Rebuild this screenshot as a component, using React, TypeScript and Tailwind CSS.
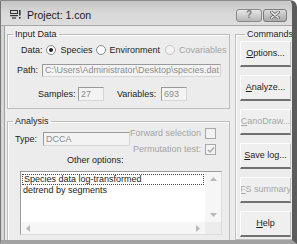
import React from "react";

function Radio({ checked, disabled }: { checked?: boolean; disabled?: boolean }) {
  return (
    <span
      className={`w-[10px] h-[10px] rounded-full border flex items-center justify-center shrink-0 ${
        disabled ? "border-[#c4c4c4] bg-[#f4f4f4]" : "border-[#8a8a8a] bg-white"
      }`}
    >
      {checked && <span className="w-[4px] h-[4px] rounded-full bg-[#1e1e1e]" />}
    </span>
  );
}

function Check({ checked }: { checked?: boolean }) {
  return (
    <span className="w-[11px] h-[11px] border border-[#a8a8a8] bg-[#f2f2f2] flex items-center justify-center shrink-0">
      {checked && (
        <svg width="8" height="8" viewBox="0 0 8 8">
          <path d="M1 4 L3 6 L7 1.5" fill="none" stroke="#a8a8a8" strokeWidth="1.4" />
        </svg>
      )}
    </span>
  );
}

function Btn({ pre, rest, disabled }: { pre: string; rest: string; disabled?: boolean }) {
  return (
    <div
      className={`h-[26px] w-[51px] flex items-center justify-center bg-[#efefef] border-t border-l border-t-white border-l-white border-r border-r-[#c4c4c4] border-b-2 border-b-[#707070] whitespace-nowrap overflow-hidden ${
        disabled ? "text-[#a6a6a6]" : "text-[#1c1c1c]"
      }`}
    >
      <span>
        <span className="underline underline-offset-1">{pre}</span>
        {rest}
      </span>
    </div>
  );
}

function Field({ text, w, h }: { text: string; w: string; h: string }) {
  return (
    <div
      className={`${w} ${h} flex items-center pl-[2px] bg-[#f3f3f3] border-t border-l border-[#9a9a9a] border-r border-b border-r-[#d6d6d6] border-b-[#d6d6d6] text-[#8e8e8e] whitespace-nowrap overflow-hidden shrink-0`}
    >
      {text}
    </div>
  );
}

export default function App() {
  return (
    <div className="w-[297px] h-[244px] overflow-hidden bg-white font-['Liberation_Sans',Arial,sans-serif] text-[9px] leading-[11px] text-[#1c1c1c]">
      <div className="w-[297px] h-[244px] flex flex-col border-l border-l-[#767676] border-r-[5px] border-r-[#5c5c5c] border-b-[4px] border-b-[#a2a2a2] border-t border-t-[#8a8a8a] rounded-tr-[7px] bg-[#d6d6d6]">
        {/* title bar */}
        <div className="h-[25px] shrink-0 flex items-center bg-gradient-to-b from-[#c4c4c4] via-[#d8d8d8] to-[#dedede] border-b border-b-[#a6a6a6] rounded-tr-[6px]">
          <svg className="ml-[9px] mt-[2px]" width="11" height="9" viewBox="0 0 11 9">
            <rect x="0.5" y="0.5" width="7" height="3" fill="none" stroke="#333" />
            <rect x="0" y="5" width="8" height="1.2" fill="#333" />
            <rect x="2" y="7.4" width="4" height="1.2" fill="#333" />
            <rect x="9" y="0" width="1.6" height="5.5" fill="#333" />
            <rect x="9" y="7" width="1.6" height="1.6" fill="#333" />
          </svg>
          <span className="ml-[6px] mt-[3px] text-[10.5px] leading-[12px] text-[#1a1a1a]">Project: 1.con</span>
          <div className="ml-auto mr-[5px] mt-[4px] flex gap-[1px]">
            <div className="w-[26px] h-[13px] rounded-[3px] border border-[#8a8a8a] bg-gradient-to-b from-[#e8e8e8] to-[#b6b6b6] flex items-center justify-center text-[10px] leading-[10px] font-bold text-[#7a7a7a]">
              ?
            </div>
            <div className="w-[24px] h-[13px] rounded-[3px] border border-[#7c7c7c] bg-gradient-to-b from-[#dcdcdc] to-[#a8a8a8] flex items-center justify-center">
              <svg width="10" height="8" viewBox="0 0 10 8">
                <path d="M1.5 1 L8.5 7 M8.5 1 L1.5 7" stroke="#6a6a6a" strokeWidth="3" strokeLinecap="round" />
                <path d="M1.5 1 L8.5 7 M8.5 1 L1.5 7" stroke="#f4f4f4" strokeWidth="1.4" strokeLinecap="round" />
              </svg>
            </div>
          </div>
        </div>

        {/* client */}
        <div className="flex-1 min-h-0 ml-[3px] border-l border-l-[#a0a0a0] bg-[#ececec] flex overflow-hidden">
          {/* left column */}
          <div className="pl-[2px] flex flex-col shrink-0">
            <fieldset className="mt-[3px] w-[223px] border border-[#bdbdbd] pt-[4px] pb-[7px] shadow-[inset_1px_1px_0_#ffffff]">
              <legend className="ml-[5px] px-[2px]">Input Data</legend>
              <div className="h-[12px] flex items-center pl-[13px] whitespace-nowrap">
                <span>Data:</span>
                <span className="ml-[3px]"><Radio checked /></span>
                <span className="ml-[5px]">Species</span>
                <span className="ml-[3px]"><Radio /></span>
                <span className="ml-[4px]">Environment</span>
                <span className="ml-[5px]"><Radio disabled /></span>
                <span className="ml-[4px] text-[#a4a4a4]">Covariables</span>
              </div>
              <div className="mt-[8px] flex items-center pl-[9px]">
                <span className="w-[25px] shrink-0">Path:</span>
                <Field text="C:\Users\Administrator\Desktop\species.dat" w="w-[179px]" h="h-[13px]" />
              </div>
              <div className="mt-[10px] flex items-center pl-[30px] whitespace-nowrap">
                <span className="w-[40px] shrink-0">Samples:</span>
                <Field text="27" w="w-[26px]" h="h-[14px]" />
                <span className="ml-[13px] w-[44px] shrink-0">Variables:</span>
                <Field text="693" w="w-[26px]" h="h-[14px]" />
              </div>
            </fieldset>

            <fieldset className="mt-[7px] w-[223px] shrink-0 border border-[#bdbdbd] pb-[10px] shadow-[inset_1px_1px_0_#ffffff]">
              <legend className="ml-[5px] px-[2px]">Analysis</legend>
              <div className="flex items-start">
                <div className="mt-[5px] pl-[7px] flex items-center shrink-0">
                  <span className="w-[28px] shrink-0">Type:</span>
                  <Field text="DCCA" w="w-[87px]" h="h-[14px]" />
                </div>
                <div className="ml-auto mr-[13px] flex flex-col items-end gap-[5px] mt-[1px] text-[#a4a4a4] whitespace-nowrap">
                  <div className="h-[11px] flex items-center gap-[4px]">
                    <span>Forward selection</span>
                    <Check />
                  </div>
                  <div className="h-[11px] flex items-center gap-[4px]">
                    <span>Permutation test:</span>
                    <Check checked />
                  </div>
                </div>
              </div>
              <div className="pl-[59px] h-[11px] whitespace-nowrap">Other options:</div>
              <div className="mt-[5px] ml-[12px] w-[202px] h-[64px] border border-t-[#9c9c9c] border-l-[#9c9c9c] border-r-[#dcdcdc] border-b-[#dcdcdc] bg-white flex flex-col">
                <div className="flex flex-1 min-h-0">
                  <div className="flex-1 min-w-0 pt-[2px]">
                    <div className="h-[11px] mx-[1px] border border-dotted border-[#4a4a4a] pl-[1px] flex items-center whitespace-nowrap">
                      Species data log-transformed
                    </div>
                    <div className="h-[11px] pl-[2px] flex items-center whitespace-nowrap">detrend by segments</div>
                  </div>
                  <div className="w-[16px] bg-[#f6f6f6] flex flex-col items-center justify-between py-[5px]">
                    <svg width="7" height="4" viewBox="0 0 7 4"><path d="M0 4 L3.5 0 L7 4 Z" fill="#b8b8b8" /></svg>
                    <svg width="7" height="4" viewBox="0 0 7 4"><path d="M0 0 L3.5 4 L7 0 Z" fill="#b8b8b8" /></svg>
                  </div>
                </div>
                <div className="h-[12px] flex shrink-0">
                  <div className="flex-1 bg-[#f6f6f6] flex items-center justify-between px-[5px]">
                    <svg width="4" height="7" viewBox="0 0 4 7"><path d="M4 0 L0 3.5 L4 7 Z" fill="#b8b8b8" /></svg>
                    <svg width="4" height="7" viewBox="0 0 4 7"><path d="M0 0 L4 3.5 L0 7 Z" fill="#b8b8b8" /></svg>
                  </div>
                  <div className="w-[16px] bg-[#ececec]" />
                </div>
              </div>
            </fieldset>
          </div>

          {/* commands */}
          <fieldset className="mt-[3px] ml-[5px] w-[62px] shrink-0 border border-[#bdbdbd] pl-[4px] shadow-[inset_1px_1px_0_#ffffff]">
            <legend className="ml-[5px] px-[2px]">Commands</legend>
            <div className="mt-[1px] flex flex-col gap-[8px]">
              <Btn pre="O" rest="ptions..." />
              <Btn pre="A" rest="nalyze..." />
              <Btn pre="C" rest="anoDraw..." disabled />
              <Btn pre="S" rest="ave log..." />
              <Btn pre="F" rest="S summary" disabled />
              <Btn pre="H" rest="elp" />
            </div>
          </fieldset>
        </div>
      </div>
    </div>
  );
}
